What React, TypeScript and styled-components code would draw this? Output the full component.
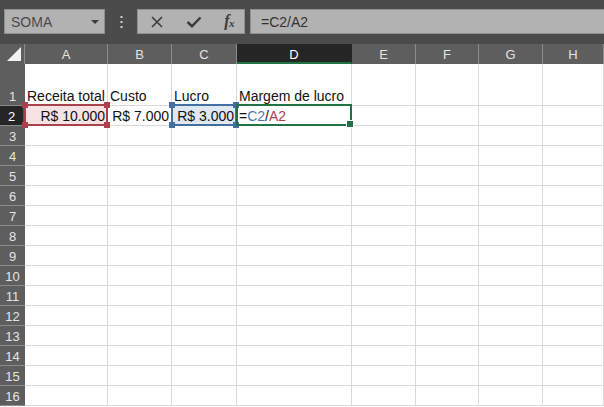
import React from 'react';
import styled, { createGlobalStyle, css } from 'styled-components';

const GlobalStyle = createGlobalStyle`
  html, body {
    margin: 0;
    padding: 0;
    background: #ffffff;
    overflow: hidden;
  }
  body {
    font-family: 'Liberation Sans', Arial, sans-serif;
  }
`;

const COLS = ['A', 'B', 'C', 'D', 'E', 'F', 'G', 'H'];
const ROWS = Array.from({ length: 16 }, (_, i) => i + 1);

type Tone = 'red' | 'blue' | 'green';

const tones: Record<Tone, { line: string; fill: string }> = {
  red: { line: '#a9424c', fill: '#f6e2e3' },
  blue: { line: '#44709f', fill: '#dfe7f1' },
  green: { line: '#217346', fill: 'transparent' },
};

interface CellData {
  text?: React.ReactNode;
  align?: 'left' | 'right';
  tone?: Tone;
}

// built inside a function so the styled parts below exist when it runs
const buildData = (): Record<string, CellData> => ({
  A1: { text: 'Receita total' },
  B1: { text: 'Custo' },
  C1: { text: 'Lucro' },
  D1: { text: 'Margem de lucro' },
  A2: { text: 'R$ 10.000', align: 'right', tone: 'red' },
  B2: { text: 'R$ 7.000', align: 'right' },
  C2: { text: 'R$ 3.000', align: 'right', tone: 'blue' },
  D2: {
    text: (
      <>
        =<RefText $tone="blue">C2</RefText>/<RefText $tone="red">A2</RefText>
      </>
    ),
    tone: 'green',
  },
});

const ACTIVE_COL = 'D';
const ACTIVE_ROW = 2;

export default function App() {
  const data = buildData();
  return (
    <>
      <GlobalStyle />
      <Window>
        <Toolbar>
          <NameBox>
            <span>SOMA</span>
            <DropArrow />
          </NameBox>
          <Grip>
            <svg width="3" height="12" viewBox="0 0 3 12">
              <rect x="0.5" y="0" width="2" height="2" fill="#d0d0d0" />
              <rect x="0.5" y="5" width="2" height="2" fill="#d0d0d0" />
              <rect x="0.5" y="10" width="2" height="2" fill="#d0d0d0" />
            </svg>
          </Grip>
          <FormulaButtons>
            <IconButton>
              <svg width="12" height="12" viewBox="0 0 12 12">
                <path d="M1 1 L11 11 M11 1 L1 11" stroke="#3c3c3c" strokeWidth="1.6" fill="none" />
              </svg>
            </IconButton>
            <IconButton>
              <svg width="16" height="12" viewBox="0 0 16 12">
                <path d="M1.5 6 L6 10.2 L14.5 1.5" stroke="#3c3c3c" strokeWidth="2.4" fill="none" />
              </svg>
            </IconButton>
            <IconButton>
              <Fx>
                f<sub>x</sub>
              </Fx>
            </IconButton>
          </FormulaButtons>
          <FormulaInput>=C2/A2</FormulaInput>
        </Toolbar>

        <Sheet>
          <Corner>
            <svg width="14" height="14" viewBox="0 0 14 14">
              <polygon points="14,0 14,14 0,14" fill="#f2f2f2" />
            </svg>
          </Corner>
          {COLS.map((c) => (
            <ColHeader key={c} $active={c === ACTIVE_COL}>
              {c}
            </ColHeader>
          ))}
          {ROWS.map((r) => (
            <React.Fragment key={r}>
              <RowHeader $active={r === ACTIVE_ROW}>{r}</RowHeader>
              {COLS.map((c) => {
                const cell = data[`${c}${r}`];
                return (
                  <Cell
                    key={c}
                    $align={cell?.align ?? 'left'}
                    $fill={cell?.tone ? tones[cell.tone].fill : undefined}
                  >
                    {cell?.text}
                    {cell?.tone && (
                      <Frame $tone={cell.tone}>
                        {cell.tone === 'green' ? (
                          <Handle $tone="green" $corner="br" />
                        ) : (
                          <>
                            <Handle $tone={cell.tone} $corner="tl" />
                            <Handle $tone={cell.tone} $corner="tr" />
                            <Handle $tone={cell.tone} $corner="bl" />
                            <Handle $tone={cell.tone} $corner="br" />
                          </>
                        )}
                      </Frame>
                    )}
                  </Cell>
                );
              })}
            </React.Fragment>
          ))}
        </Sheet>
      </Window>
    </>
  );
}

const Window = styled.div`
  width: 604px;
  height: 407px;
  display: flex;
  flex-direction: column;
  background: #ffffff;
  overflow: hidden;
`;

const Toolbar = styled.div`
  height: 44px;
  flex-shrink: 0;
  box-sizing: border-box;
  padding: 9px 0 10px 4px;
  display: flex;
  align-items: stretch;
  background: #4b4b4b;
`;

const boxBase = css`
  box-sizing: border-box;
  background: #b2b2b2;
  border: 1px solid #8f8f8f;
`;

const NameBox = styled.div`
  ${boxBase};
  width: 101px;
  display: flex;
  align-items: center;
  justify-content: space-between;
  padding: 0 5px 0 6px;
  font-size: 14px;
  color: #4a4a4a;
`;

const DropArrow = styled.span`
  width: 0;
  height: 0;
  border-left: 4px solid transparent;
  border-right: 4px solid transparent;
  border-top: 4px solid #3c3c3c;
  margin-top: 1px;
`;

const Grip = styled.div`
  width: 32px;
  display: flex;
  align-items: center;
  justify-content: center;
`;

const FormulaButtons = styled.div`
  ${boxBase};
  width: 108px;
  display: flex;
  align-items: center;
  justify-content: space-between;
  padding: 0 10px 0 13px;
`;

const IconButton = styled.span`
  display: flex;
  align-items: center;
  justify-content: center;
  height: 16px;
`;

const Fx = styled.span`
  font-family: 'Liberation Serif', 'Times New Roman', serif;
  font-style: italic;
  font-weight: bold;
  font-size: 16px;
  line-height: 16px;
  color: #3c3c3c;
  letter-spacing: -0.5px;

  sub {
    font-size: 11px;
    vertical-align: -1px;
  }
`;

const FormulaInput = styled.div`
  ${boxBase};
  flex: 1;
  margin-left: 5px;
  border-right: none;
  display: flex;
  align-items: center;
  padding-left: 10px;
  font-size: 14px;
  color: #333333;
`;

const Sheet = styled.div`
  flex: 1;
  display: grid;
  grid-template-columns: 25px 83px 64px 65px 115px 64px 63px 64px 61px;
  grid-template-rows: 20px 42px repeat(15, 20px);
  background: #ffffff;
`;

const headerBase = css`
  box-sizing: border-box;
  background: #5e5e5e;
  color: #e4e4e4;
  font-size: 13px;
  display: flex;
  align-items: center;
  justify-content: center;
`;

const Corner = styled.div`
  ${headerBase};
  align-items: flex-end;
  justify-content: flex-end;
  padding: 0 3px 3px 0;
  border-right: 1px solid #8c8c8c;
`;

const ColHeader = styled.div<{ $active: boolean }>`
  ${headerBase};
  padding-top: 1px;
  border-right: 1px solid #8c8c8c;
  ${({ $active }) =>
    $active &&
    css`
      background: #252525;
      color: #ffffff;
      border-right-color: #252525;
      border-bottom: 2px solid #217346;
      padding-top: 2px;
    `}
`;

const RowHeader = styled.div<{ $active: boolean }>`
  ${headerBase};
  align-items: flex-end;
  padding-bottom: 1px;
  border-bottom: 1px solid #8c8c8c;
  ${({ $active }) =>
    $active &&
    css`
      background: #252525;
      color: #ffffff;
      border-right: 2px solid #217346;
    `}
`;

const Cell = styled.div<{ $align: 'left' | 'right'; $fill?: string }>`
  position: relative;
  box-sizing: border-box;
  border-right: 1px solid #d9d9d9;
  border-bottom: 1px solid #d9d9d9;
  background: ${({ $fill }) => $fill ?? '#ffffff'};
  display: flex;
  align-items: flex-end;
  justify-content: ${({ $align }) => ($align === 'right' ? 'flex-end' : 'flex-start')};
  padding: 0 2px 0 2px;
  font-size: 14px;
  color: #111111;
  white-space: nowrap;
  overflow: visible;
  line-height: 17px;
`;

const RefText = styled.span<{ $tone: Tone }>`
  color: ${({ $tone }) => ($tone === 'blue' ? '#4a78b0' : '#a9424c')};
`;

const Frame = styled.span<{ $tone: Tone }>`
  position: absolute;
  top: -2px;
  left: -1px;
  right: -1px;
  bottom: -1px;
  border: 2px solid ${({ $tone }) => tones[$tone].line};
  z-index: 2;
  pointer-events: none;
`;

const cornerPos = {
  tl: css`top: -4px; left: -4px;`,
  tr: css`top: -4px; right: -4px;`,
  bl: css`bottom: -4px; left: -4px;`,
  br: css`bottom: -4px; right: -4px;`,
};

const Handle = styled.span<{ $tone: Tone; $corner: 'tl' | 'tr' | 'bl' | 'br' }>`
  position: absolute;
  width: 6px;
  height: 6px;
  background: ${({ $tone }) => tones[$tone].line};
  ${({ $tone }) => $tone === 'green' && css`border: 1px solid #ffffff;`}
  ${({ $corner }) => cornerPos[$corner]};
`;
